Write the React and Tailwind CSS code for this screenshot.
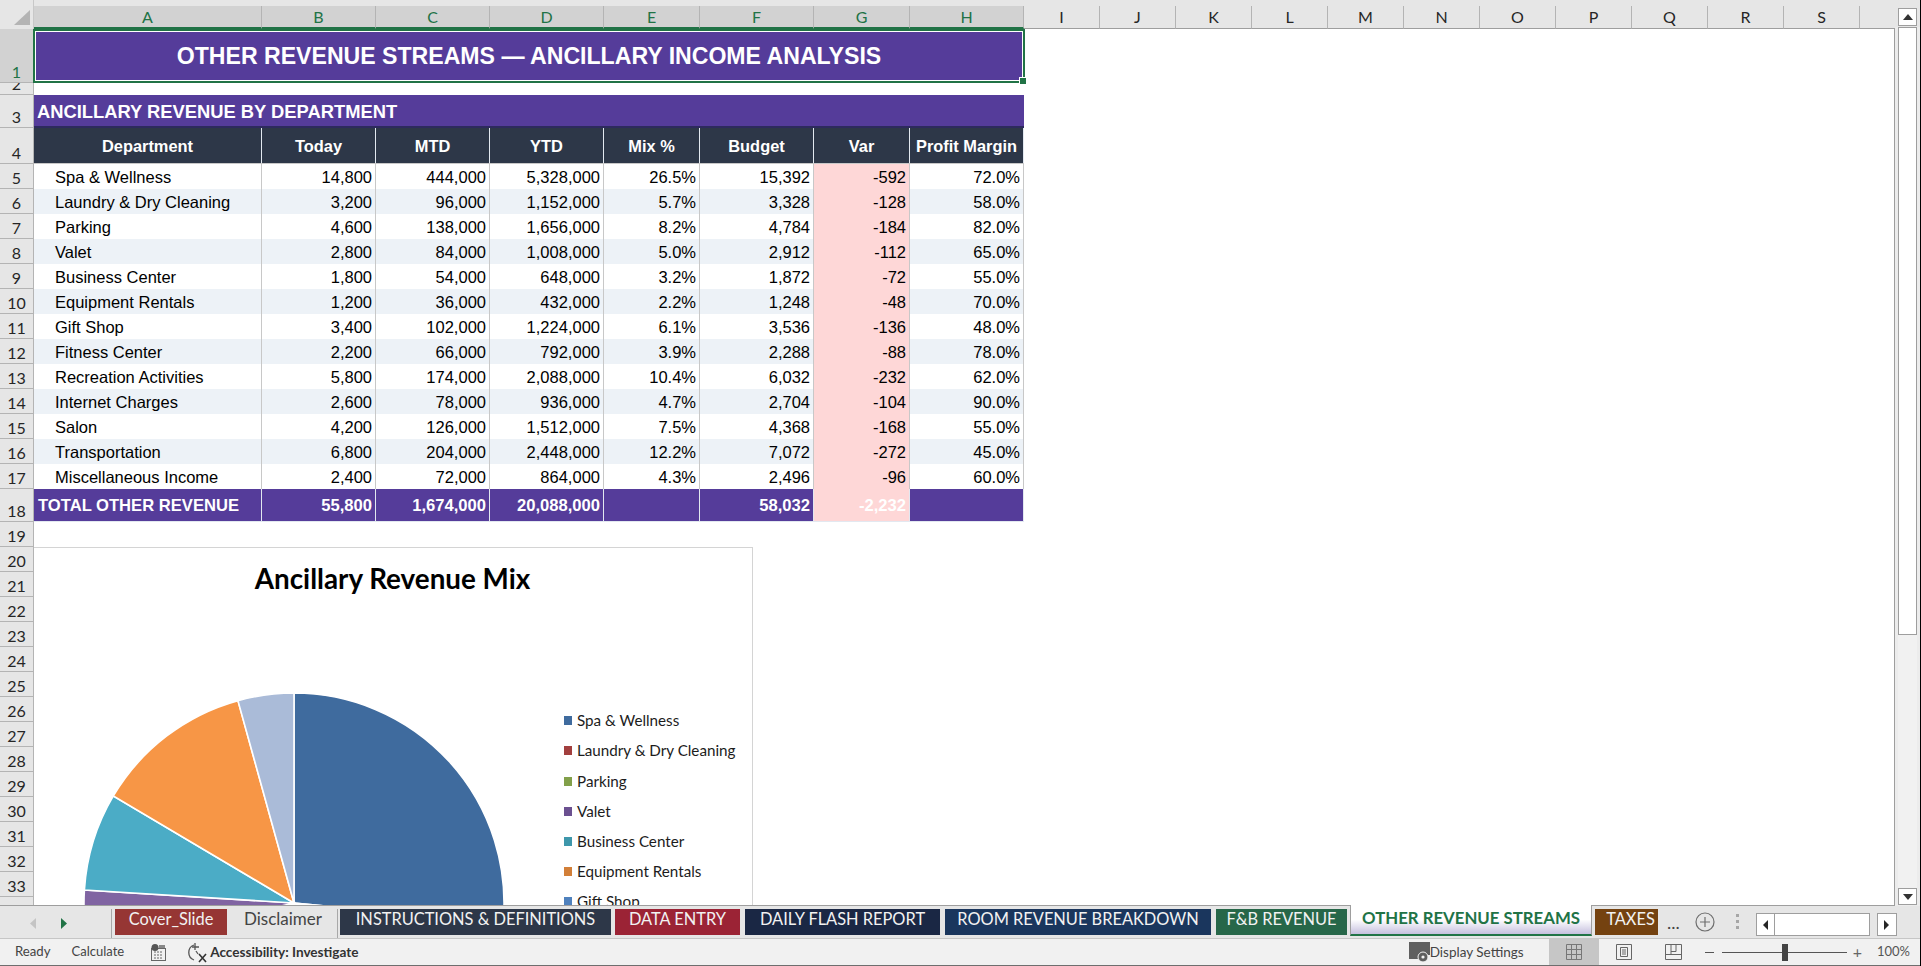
import React from "react";

const arial = "[font-family:'Liberation_Sans',Arial,sans-serif]";
const lato = "[font-family:Lato,sans-serif]";

const rows = [
  ["Spa & Wellness", "14,800", "444,000", "5,328,000", "26.5%", "15,392", "-592", "72.0%"],
  ["Laundry & Dry Cleaning", "3,200", "96,000", "1,152,000", "5.7%", "3,328", "-128", "58.0%"],
  ["Parking", "4,600", "138,000", "1,656,000", "8.2%", "4,784", "-184", "82.0%"],
  ["Valet", "2,800", "84,000", "1,008,000", "5.0%", "2,912", "-112", "65.0%"],
  ["Business Center", "1,800", "54,000", "648,000", "3.2%", "1,872", "-72", "55.0%"],
  ["Equipment Rentals", "1,200", "36,000", "432,000", "2.2%", "1,248", "-48", "70.0%"],
  ["Gift Shop", "3,400", "102,000", "1,224,000", "6.1%", "3,536", "-136", "48.0%"],
  ["Fitness Center", "2,200", "66,000", "792,000", "3.9%", "2,288", "-88", "78.0%"],
  ["Recreation Activities", "5,800", "174,000", "2,088,000", "10.4%", "6,032", "-232", "62.0%"],
  ["Internet Charges", "2,600", "78,000", "936,000", "4.7%", "2,704", "-104", "90.0%"],
  ["Salon", "4,200", "126,000", "1,512,000", "7.5%", "4,368", "-168", "55.0%"],
  ["Transportation", "6,800", "204,000", "2,448,000", "12.2%", "7,072", "-272", "45.0%"],
  ["Miscellaneous Income", "2,400", "72,000", "864,000", "4.3%", "2,496", "-96", "60.0%"],
];

const sliceColors = [
  "#3f6b9e", "#a23f3e", "#82a04a", "#6b5090", "#3e97ab", "#d27f38",
  "#4f81bd", "#c0504d", "#9bbb59", "#8064a2", "#4bacc6", "#f79646", "#aabbd8",
];

const colCls = "grid grid-cols-[228px_114px_114px_114px_96px_114px_96px_114px]";

function RowHead({ n, selected }) {
  return (
    <div
      className={`w-[34px] shrink-0 h-full flex items-end justify-center overflow-hidden border-b border-b-[#b4b4b4] border-r border-r-[#b4b4b4] text-[16px] leading-[21px] ${lato} ${
        selected ? "bg-[#d2d2d2] text-[#217346]" : "bg-[#e6e6e6] text-[#262626]"
      }`}
    >
      <span>{n}</span>
    </div>
  );
}

function Pie() {
  const total = 55800;
  const vals = rows.map((r) => Number(r[1].replace(",", "")));
  const cx = 212;
  const cy = 212;
  const rad = 210;
  let a = 0;
  const paths = vals.map((v, i) => {
    const a0 = a;
    a += (v / total) * Math.PI * 2;
    const x0 = cx + rad * Math.sin(a0);
    const y0 = cy - rad * Math.cos(a0);
    const x1 = cx + rad * Math.sin(a);
    const y1 = cy - rad * Math.cos(a);
    const large = a - a0 > Math.PI ? 1 : 0;
    return (
      <path
        key={i}
        d={`M${cx} ${cy}L${x0} ${y0}A${rad} ${rad} 0 ${large} 1 ${x1} ${y1}Z`}
        fill={sliceColors[i]}
        stroke="#ffffff"
        strokeWidth="1.6"
      />
    );
  });
  return (
    <svg width="424" height="424" viewBox="0 0 424 424" className="shrink-0">
      {paths}
    </svg>
  );
}

function Chart() {
  return (
    <div className="absolute left-[34px] top-[518px] w-[719px] h-[500px] bg-white border-t border-r border-[#d4d4d4]">
      <div className={`text-center text-[27.8px] leading-[34px] font-bold text-black mt-[14px] pr-[1px] ${lato}`}>
        Ancillary Revenue Mix
      </div>
      <div className="flex mt-[95px] pl-[48px]">
        <Pie />
        <div className="flex flex-col ml-[58px] mt-[14.6px]">
          {rows.map((r, i) => (
            <div key={r[0]} className="flex items-center h-[30.2px]">
              <span className="w-[8px] h-[9px] mr-[5px] shrink-0" style={{ backgroundColor: sliceColors[i] }} />
              <span className={`text-[15.2px] text-[#1c1c1c] whitespace-nowrap ${lato}`}>{r[0]}</span>
            </div>
          ))}
        </div>
      </div>
    </div>
  );
}

function ColumnHeaders() {
  const sel = [["A", 228], ["B", 114], ["C", 114], ["D", 114], ["E", 96], ["F", 114], ["G", 96], ["H", 114]];
  const rest = ["I", "J", "K", "L", "M", "N", "O", "P", "Q", "R", "S"];
  return (
    <div className={`flex h-[29px] shrink-0 bg-[#e6e6e6] pt-[6px] text-[16px] ${lato}`}>
      <div className="w-[34px] shrink-0 flex items-end justify-end pr-[3px] pb-[4px] -mt-[6px] border-r border-r-[#c8c8c8]">
        <svg width="16" height="15" viewBox="0 0 16 15"><path d="M16 0V15H0Z" fill="#b4b4b4" /></svg>
      </div>
      {sel.map(([c, w]) => (
        <div
          key={c}
          style={{ width: w }}
          className="shrink-0 flex items-center justify-center bg-[#d2d2d2] text-[#217346] border-r border-r-[#b4b4b4] border-b-2 border-b-[#217346]"
        >
          {c}
        </div>
      ))}
      {rest.map((c) => (
        <div key={c} className="w-[76px] shrink-0 flex items-center justify-center text-[#262626] border-r border-r-[#b4b4b4] border-b border-b-[#9e9e9e]">
          {c}
        </div>
      ))}
      <div className="flex-1 border-b border-b-[#9e9e9e]" />
    </div>
  );
}

function Row({ n, h, selected, children }) {
  return (
    <div className="flex shrink-0" style={{ height: h }}>
      <RowHead n={n} selected={selected} />
      {children}
    </div>
  );
}

function Sheet() {
  const blanks = [];
  for (let i = 19; i <= 34; i++) blanks.push(i);
  return (
    <div className={`relative flex-1 flex flex-col overflow-hidden bg-white border-b border-b-[#9e9e9e] border-r border-r-[#9e9e9e] ${arial}`}>
      <Row n={1} h={54} selected>
        <div className="relative w-[992px] -ml-[1px] h-full border-2 border-[#217346] bg-white p-[1px]">
          <div className="h-full bg-[#553c9a] text-white font-bold text-[23.1px] flex items-center justify-center">
            OTHER REVENUE STREAMS — ANCILLARY INCOME ANALYSIS
          </div>
          <span className="absolute -right-[4px] -bottom-[4px] w-[6px] h-[6px] bg-[#217346] border border-white box-content" />
        </div>
      </Row>
      <Row n={2} h={12}><div /></Row>
      <Row n={3} h={33}>
        <div className="w-[990px] h-full bg-[#553c9a] border-b-2 border-b-[#2d2a5e] text-white font-bold text-[18.35px] flex items-center pl-[3px] pt-[3px]">
          ANCILLARY REVENUE BY DEPARTMENT
        </div>
      </Row>
      <Row n={4} h={36}>
        <div className={`${colCls} w-[990px] h-full bg-[#2d3748] text-white font-bold text-[16.4px] border-b border-b-[#c8c8c8]`}>
          {["Department", "Today", "MTD", "YTD", "Mix %", "Budget", "Var", "Profit Margin"].map((t) => (
            <div key={t} className="flex items-center justify-center border-r border-r-[#e2e8f0] whitespace-nowrap pt-[2px]">{t}</div>
          ))}
        </div>
      </Row>
      {rows.map((r, i) => (
        <Row key={r[0]} n={i + 5} h={25}>
          <div className={`${colCls} w-[990px] h-full text-black text-[16.5px] ${i % 2 ? "bg-[#edf2f7]" : "bg-white"}`}>
            {r.map((v, j) => (
              <div
                key={j}
                className={`flex items-center border-r border-b border-[#c8c8c8] whitespace-nowrap pt-[1px] ${
                  j === 0 ? "pl-[21px]" : "justify-end pr-[3px]"
                } ${j === 6 ? "bg-[#fed7d7]" : ""}`}
              >
                {v}
              </div>
            ))}
          </div>
        </Row>
      ))}
      <Row n={18} h={33}>
        <div className={`${colCls} w-[990px] h-full bg-[#553c9a] text-white font-bold text-[16.6px]`}>
          {["TOTAL OTHER REVENUE", "55,800", "1,674,000", "20,088,000", "", "58,032", "-2,232", ""].map((v, j) => (
            <div
              key={j}
              className={`flex items-center border-r border-b border-[#e2e8f0] whitespace-nowrap pt-[3px] ${
                j === 0 ? "pl-[4px]" : "justify-end pr-[3px]"
              } ${j === 6 ? "bg-[#fed7d7]" : ""}`}
            >
              {v}
            </div>
          ))}
        </div>
      </Row>
      {blanks.map((n) => (
        <Row key={n} n={n} h={25}><div /></Row>
      ))}
      <Chart />
    </div>
  );
}

function VScroll() {
  return (
    <div className="w-[25px] shrink-0 h-[906px] flex flex-col bg-white">
      <div className="h-[27px] shrink-0 bg-[#e6e6e6] pt-[8px] px-[3px]">
        <div className="w-[19px] h-[18px] border border-[#9e9e9e] bg-white flex items-center justify-center">
          <svg width="10" height="6" viewBox="0 0 10 6"><path d="M0 6L5 0L10 6Z" fill="#333" /></svg>
        </div>
      </div>
      <div className="px-[3px] h-[608px] shrink-0 bg-[#ececec]">
        <div className="w-[19px] h-full border border-[#9e9e9e] bg-white" />
      </div>
      <div className="flex-1 flex flex-col px-[3px] bg-[#ececec]">
        <div className="flex-1 bg-[#f1f1f1]" />
        <div className="w-[19px] h-[17px] mb-[1px] border border-[#9e9e9e] bg-white flex items-center justify-center">
          <svg width="10" height="6" viewBox="0 0 10 6"><path d="M0 0L5 6L10 0Z" fill="#333" /></svg>
        </div>
      </div>
    </div>
  );
}

const tabs = [
  { t: "Cover_Slide", w: 112, ml: 3, bg: "bg-[#963634]" },
  { t: "Disclaimer", w: 109, ml: 2, bg: "bg-[#e6e6e6]", dark: true },
  { t: "INSTRUCTIONS & DEFINITIONS", w: 271, ml: 2, bg: "bg-[#2d3748]" },
  { t: "DATA ENTRY", w: 125, ml: 4, bg: "bg-[#9b2335]" },
  { t: "DAILY FLASH REPORT", w: 195, ml: 5, bg: "bg-[#1a2744]" },
  { t: "ROOM REVENUE BREAKDOWN", w: 266, ml: 5, bg: "bg-[#1a365d]" },
  { t: "F&B REVENUE", w: 131, ml: 5, bg: "bg-[#276749]" },
];

function TabBar() {
  return (
    <div className={`relative h-[33px] shrink-0 flex items-start bg-[#e6e6e6] border-b border-b-[#c6c6c6] text-[16.4px] ${lato}`}>
      <div className="w-[112px] h-[29px] mt-[3px] shrink-0 flex items-center border-r border-r-[#a8a8a8]">
        <svg width="6" height="11" viewBox="0 0 6 11" className="ml-[30px]"><path d="M6 0L0 5.5L6 11Z" fill="#c4c4c4" /></svg>
        <svg width="6" height="11" viewBox="0 0 6 11" className="ml-[25px]"><path d="M0 0L6 5.5L0 11Z" fill="#217346" /></svg>
      </div>
      {tabs.map((x) => (
        <div
          key={x.t}
          style={{ width: x.w, marginLeft: x.ml }}
          className={`mt-[3px] shrink-0 flex items-center justify-center whitespace-nowrap ${x.bg} ${
            x.dark ? "text-[#444] border-r border-r-[#a8a8a8] h-[29px] pb-[9px] text-[17px]" : "text-[#f2f2f2] h-[26px] pb-[6px]"
          }`}
        >
          {x.t}
        </div>
      ))}
      <div className="w-[242px] ml-[3px] -mt-[1px] h-[31px] shrink-0 border-x border-x-[#9e9e9e] border-b-2 border-b-[#217346] bg-gradient-to-b from-white via-white to-[#c6c0de] flex items-center justify-center font-bold text-[16.8px] text-[#217346] whitespace-nowrap z-10 pb-[3px]">
        OTHER REVENUE STREAMS
      </div>
      <div className="w-[63px] h-[26px] mt-[3px] ml-[3px] pl-[8px] pb-[6px] shrink-0 flex items-center justify-center bg-[#744210] text-[#f2f2f2]">TAXES</div>
      <span className="ml-[9px] mt-[3px] text-[18px] text-[#444]">...</span>
      <svg width="20" height="20" viewBox="0 0 20 20" className="ml-[15px] mt-[6px] shrink-0" fill="none" stroke="#6e6e6e" strokeWidth="1.2">
        <circle cx="10" cy="10" r="9" />
        <path d="M10 5V15M5 10H15" />
      </svg>
      <div className="ml-[21px] mt-[8px] flex flex-col gap-[3px] shrink-0">
        <span className="w-[3px] h-[3px] bg-[#a6a6a6]" />
        <span className="w-[3px] h-[3px] bg-[#a6a6a6]" />
        <span className="w-[3px] h-[3px] bg-[#a6a6a6]" />
      </div>
      <div className="ml-[17px] mt-[7px] w-[114px] h-[23px] shrink-0 flex border border-[#9e9e9e] bg-white">
        <div className="w-[18px] h-full border-r border-r-[#9e9e9e] flex items-center justify-center">
          <svg width="5" height="10" viewBox="0 0 5 10"><path d="M5 0L0 5L5 10Z" fill="#262626" /></svg>
        </div>
      </div>
      <div className="ml-[7px] mt-[7px] w-[20px] h-[23px] shrink-0 border border-[#9e9e9e] bg-white flex items-center justify-center">
        <svg width="5" height="10" viewBox="0 0 5 10"><path d="M0 0L5 5L0 10Z" fill="#262626" /></svg>
      </div>
    </div>
  );
}

function StatusBar() {
  return (
    <div className={`h-[27px] shrink-0 flex items-center bg-[#f1f1f1] border-b border-b-[#6e6e6e] text-[13px] text-[#444] ${lato}`}>
      <span className="ml-[15px] text-[13.2px]">Ready</span>
      <span className="ml-[21px]">Calculate</span>
      <svg width="15" height="17" viewBox="0 0 15 17" className="ml-[27px] shrink-0" fill="none">
        <rect x="0.5" y="4.5" width="14" height="12" stroke="#666" />
        <circle cx="4" cy="3.5" r="3.5" fill="#555" />
        <rect x="8" y="1" width="6" height="3" fill="#888" />
        <path d="M3 8H12M3 11H12M3 14H12" stroke="#666" strokeDasharray="2 1" />
      </svg>
      <svg width="20" height="21" viewBox="0 0 20 21" className="ml-[21px] shrink-0" fill="none" stroke="#555" strokeWidth="1.3">
        <path d="M7 3A8 8 0 0 0 7 18" />
        <path d="M8 1V8M5 5H12" />
        <path d="M9 9L11 12" />
        <path d="M12 12L19 20M19 12L12 20" stroke="#333" strokeWidth="1.6" />
      </svg>
      <span className="ml-[3px] font-bold text-[13.6px] text-[#333]">Accessibility: Investigate</span>
      <svg width="24" height="22" viewBox="0 0 24 22" className="ml-auto shrink-0">
        <path d="M0 1H21V14H13V18H0Z" fill="#5f5f5f" />
        <circle cx="14" cy="16" r="5" fill="#5f5f5f" stroke="#f1f1f1" />
        <circle cx="14" cy="16" r="1.6" fill="#f1f1f1" />
      </svg>
      <span className="-ml-[3px] text-[13.5px]">Display Settings</span>
      <div className="ml-[25px] w-[50px] h-full shrink-0 bg-[#c6c6c6] flex items-center justify-center">
        <svg width="16" height="16" viewBox="0 0 16 16" fill="none" stroke="#777">
          <path d="M.5.5H15.5V15.5H.5ZM5.5.5V15.5M10.5.5V15.5M.5 5.5H15.5M.5 10.5H15.5" />
        </svg>
      </div>
      <svg width="16" height="16" viewBox="0 0 16 16" fill="none" stroke="#666" className="ml-[17px] shrink-0">
        <path d="M.5.5H15.5V15.5H.5ZM4.5 3.5H11.5V12.5H4.5ZM6 6H10M6 8H10M6 10H10" />
      </svg>
      <svg width="17" height="16" viewBox="0 0 17 16" fill="none" stroke="#666" className="ml-[33px] shrink-0">
        <path d="M.5.5H16.5V15.5H.5ZM.5 10.5H16.5M6 .5V10.5M11 .5V7.5H6" />
      </svg>
      <span className="ml-[23px] w-[9px] h-[1px] bg-[#555] shrink-0" />
      <div className="relative ml-[8px] w-[125px] h-[1px] bg-[#555] shrink-0">
        <span className="absolute left-[60px] -top-[8px] w-[6px] h-[17px] bg-[#444]" />
      </div>
      <span className="ml-[6px] text-[16px] text-[#666]">+</span>
      <span className="ml-[15px] mr-[10px] text-[13px] text-[#555]">100%</span>
    </div>
  );
}

export default function App() {
  return (
    <div className="w-[1921px] h-[966px] overflow-hidden bg-white flex flex-col border-r border-r-black">
      <div className="flex h-[906px] shrink-0">
        <div className="w-[1895px] shrink-0 h-full flex flex-col">
          <ColumnHeaders />
          <Sheet />
        </div>
        <VScroll />
      </div>
      <TabBar />
      <StatusBar />
    </div>
  );
}
